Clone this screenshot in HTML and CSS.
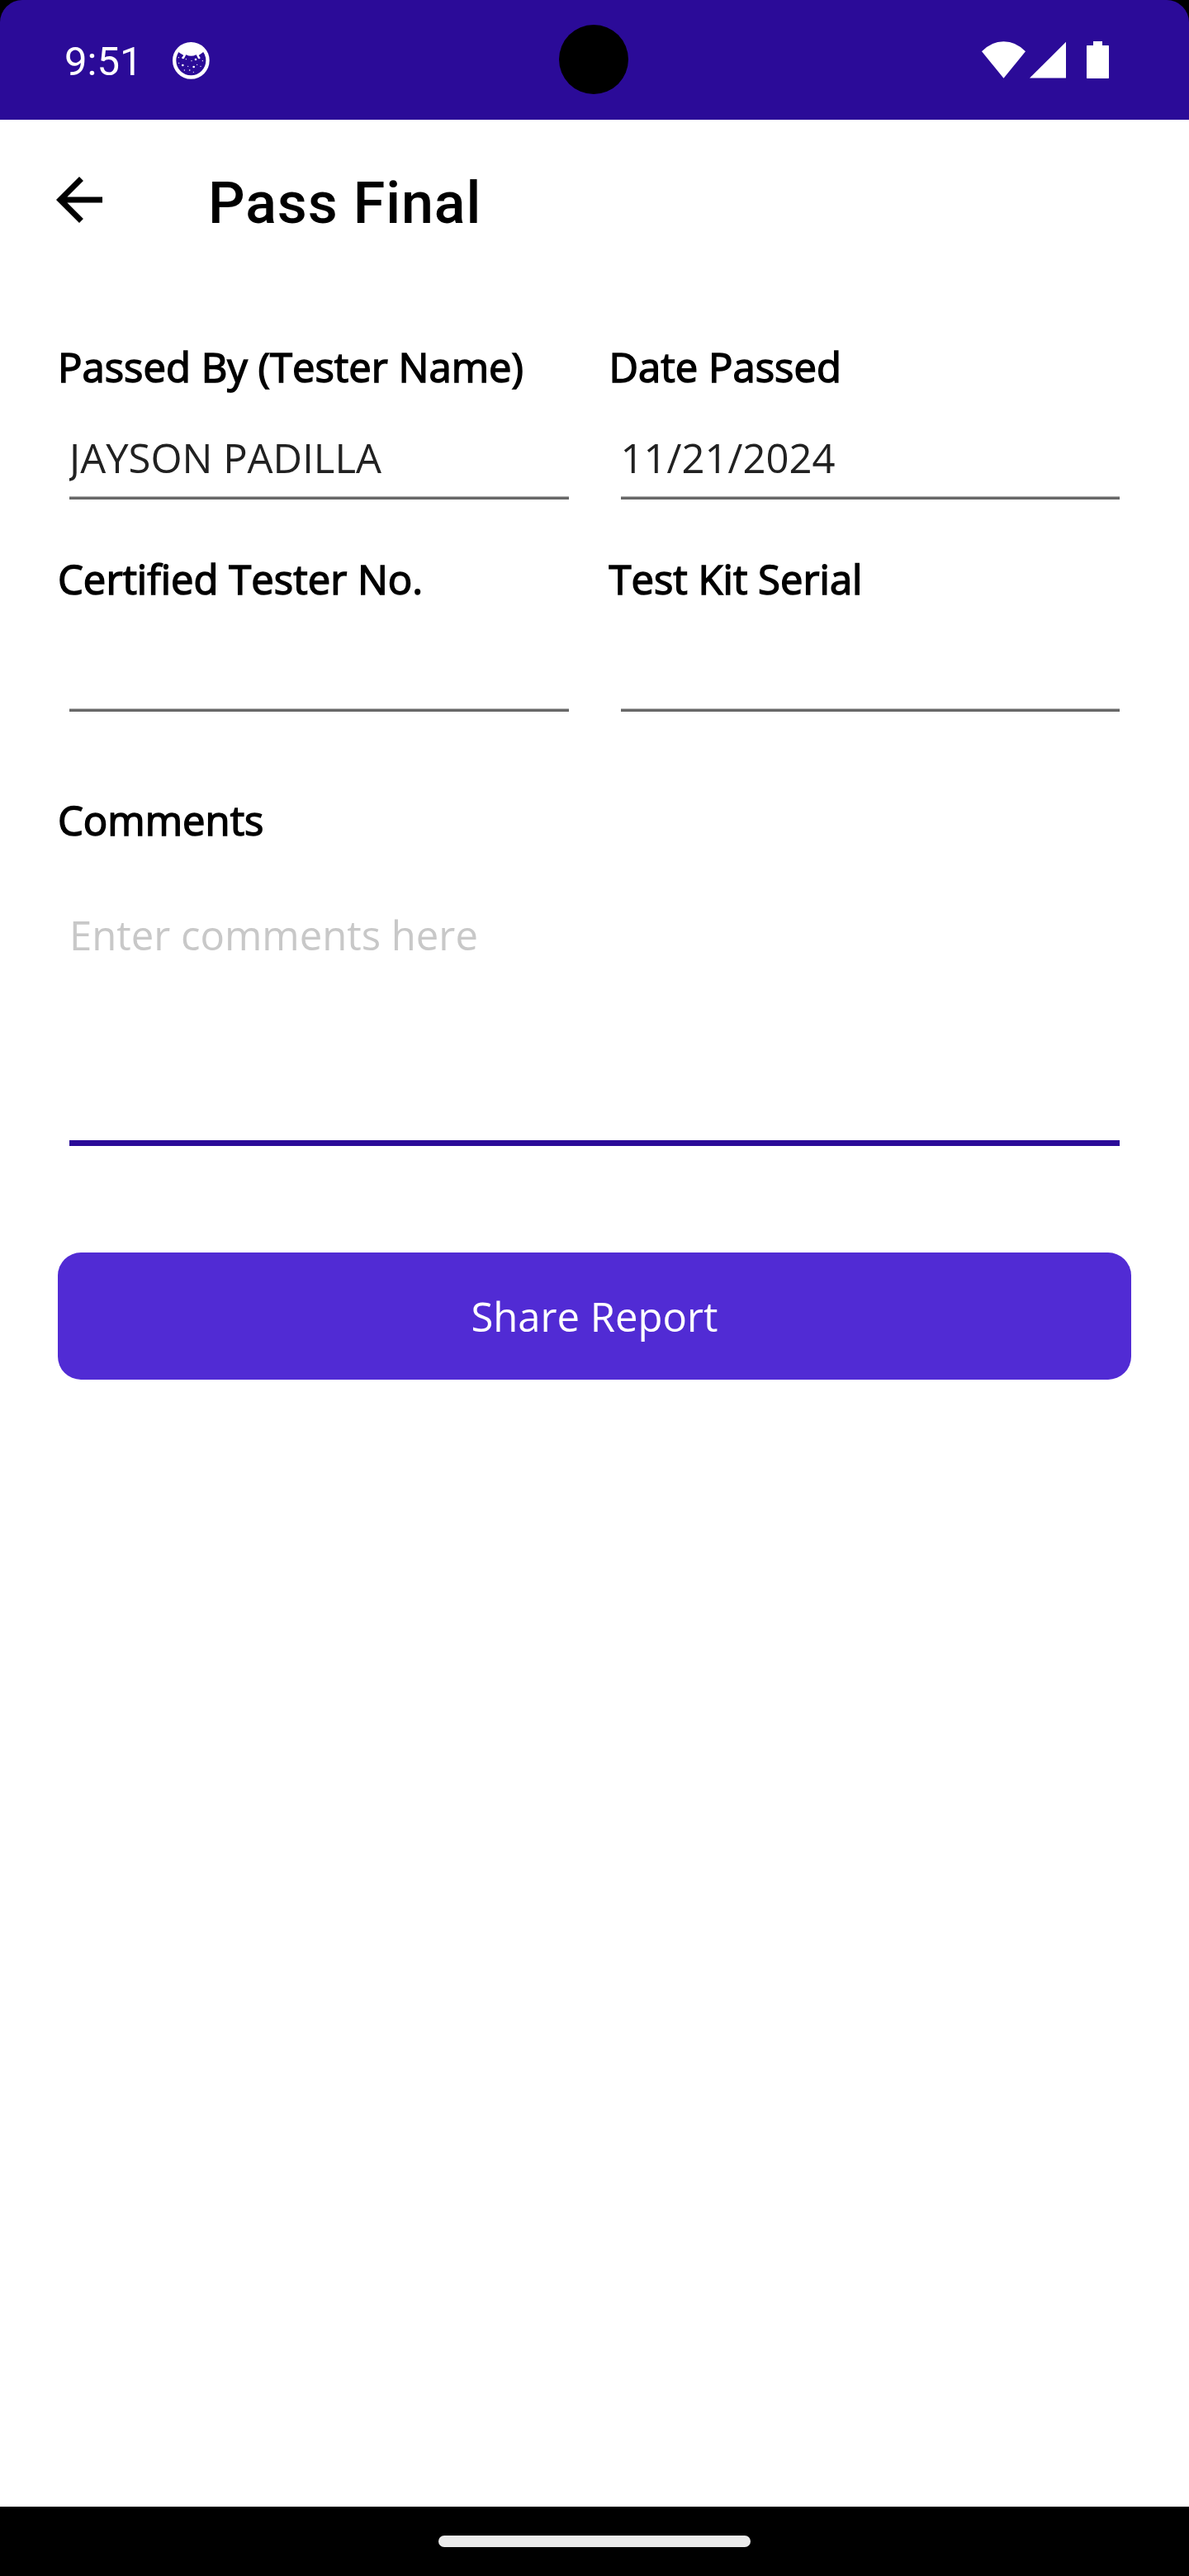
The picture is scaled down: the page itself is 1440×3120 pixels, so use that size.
FILE: index.html
```html
<!DOCTYPE html>
<html lang="en">
<head>
<meta charset="utf-8">
<title>Pass Final</title>
<link rel="stylesheet" href="styles.css">
</head>
<body>
<div class="screen">
  <div class="status-frame">
    <div class="status-bar">
      <span class="clock">9:51</span>
      <svg class="icon-notification" viewBox="624 150 141 141" fill="#fff">
        <circle cx="694" cy="220" r="60.5" fill="none" stroke="#fff" stroke-width="13"/>
        <path d="M647 184Q660 157 694 155Q728 157 742 184L736 191L722 201L728 210Q726 216 720 212L713 199Q694 208 676 199L669 212Q663 216 660 210L667 201L651 191Z"/>
        <circle cx="664" cy="237" r="4"/><circle cx="704" cy="243" r="4"/><circle cx="711" cy="216" r="4"/>
        <circle cx="676" cy="215" r="2"/><circle cx="696" cy="221" r="2"/><circle cx="649" cy="209" r="2"/>
        <circle cx="650" cy="229" r="2"/><circle cx="683" cy="241" r="2"/><circle cx="716" cy="235" r="2"/>
        <circle cx="729" cy="241" r="2"/><circle cx="736" cy="221" r="2"/><circle cx="670" cy="255" r="2"/>
        <circle cx="689" cy="255" r="2.5"/><circle cx="703" cy="262" r="2"/>
      </svg>
      <div class="system-icons">
        <svg class="icon-wifi" viewBox="0 0 53 45" fill="#fff"><path d="M0 12.3Q11.500 0.200 26.500 0.200T53 12.300L26.500 44.700Z"/></svg>
        <svg class="icon-signal" viewBox="0 0 44 45" fill="#fff"><path d="M0 44.600L44 0.700V44.600Z"/></svg>
        <svg class="icon-battery" viewBox="0 0 27 45" fill="#fff"><path d="M8 0H19V5H26.500L27 5.500V44.500L26.500 45H0.500L0 44.500V5.500L0.500 5H8Z"/></svg>
      </div>
      <div class="camera"></div>
    </div>
  </div>
  <header class="app-bar">
    <svg class="icon-back" viewBox="0 0 24 24"><path d="M20 11H7.830l5.590-5.590L12 4l-8 8 8 8 1.410-1.410L7.830 13H20v-2z"/></svg>
    <h1 class="title">Pass Final</h1>
  </header>
  <main class="form">
    <div class="fields">
      <label class="field"><span class="label">Passed By (Tester Name)</span><input class="entry" value="JAYSON PADILLA"></label>
      <label class="field"><span class="label">Date Passed</span><input class="entry" value="11/21/2024"></label>
      <label class="field"><span class="label">Certified Tester No.</span><input class="entry"></label>
      <label class="field"><span class="label">Test Kit Serial</span><input class="entry"></label>
    </div>
    <label class="comments"><span class="label">Comments</span><textarea class="editor" placeholder="Enter comments here"></textarea></label>
    <button class="share">Share Report</button>
  </main>
  <footer class="nav-bar"><div class="handle"></div></footer>
</div>
</body>
</html>
```
FILE: styles.css
```css
* { box-sizing: border-box; }
body { margin: 0; }
.screen {
  width: 1440px;
  height: 3120px;
  display: flex;
  flex-direction: column;
  background: #fff;
  font-family: "Open Sans", sans-serif;
  font-size: 49px;
  line-height: 66px;
  color: #000;
}
.status-frame { background: #000; }
.status-bar {
  position: relative;
  height: 145px;
  padding: 0 97px 0 78px;
  display: flex;
  background: #2b0b98;
  border-radius: 27px 27px 0 0;
}
.clock {
  width: 130px;
  margin-top: 46px;
  font-family: Roboto, sans-serif;
  line-height: 58px;
  color: #fff;
}
.icon-notification { width: 47px; height: 47px; margin-top: 50px; }
.system-icons { display: flex; margin: 50px 0 0 auto; }
.icon-wifi { width: 53px; height: 45px; }
.icon-signal { width: 44px; height: 45px; margin-left: 5px; }
.icon-battery { width: 27px; height: 45px; margin-left: 25px; }
.camera {
  position: absolute;
  left: 677px;
  top: 30px;
  width: 84px;
  height: 84px;
  border-radius: 50%;
  background: #000;
}
.app-bar { display: flex; height: 196px; padding-left: 54px; }
.icon-back { width: 84px; height: 84px; margin-top: 54.500px; }
.title {
  margin: 60px 0 0 114px;
  font: 500 70px/82px Roboto, sans-serif;
  letter-spacing: 0.875px;
}
.form { flex: 1; padding: 70px 70px 0; }
.fields { display: grid; grid-template-columns: 1fr 1fr; column-gap: 35px; }
.field { display: block; height: 257px; }
.label { display: block; -webkit-text-stroke: 1.500px #000; }
.entry {
  display: block;
  width: calc(100% - 28px);
  height: 94px;
  margin: 34px 14px 0;
  padding: 10px 0 15px;
  border: 0;
  border-bottom: 3px solid #686868;
  box-shadow: inset 0 -1px #b0b0b0;
  outline: 0;
  background: none;
  font: inherit;
  color: #212121;
}
.comments { display: block; margin-top: 35px; }
.editor {
  display: block;
  width: 1272px;
  height: 299px;
  margin: 63px 14px 0;
  padding: 10px 0;
  border: 0;
  border-bottom: 7px solid #2b0b98;
  outline: 0;
  resize: none;
  background: none;
  font: inherit;
}
.editor::placeholder { color: #c8c8c8; }
.share {
  display: block;
  width: 100%;
  height: 154px;
  margin-top: 129px;
  padding: 0;
  border: 0;
  border-radius: 28px;
  background: #512bd4;
  font: inherit;
  color: #fff;
}
.nav-bar { height: 84px; padding-top: 35px; background: #000; }
.handle { width: 378px; height: 14px; margin: 0 auto; border-radius: 7px; background: #ebebeb; }
```
